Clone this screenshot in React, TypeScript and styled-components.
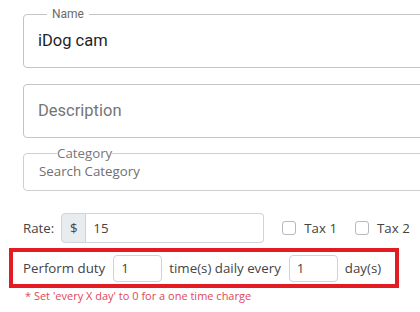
import styled, { createGlobalStyle } from "styled-components"

const GlobalStyle = createGlobalStyle`
  html, body {
    margin: 0;
    background: #ffffff;
    overflow: hidden;
  }
  * {
    box-sizing: border-box;
  }
`

export default function App() {
  return (
    <>
      <GlobalStyle />
      <Page>
        <OutlinedField>
          <OutlinedLegend>Name</OutlinedLegend>
          <OutlinedValue>iDog cam</OutlinedValue>
        </OutlinedField>

        <PlainField>
          <Placeholder>Description</Placeholder>
        </PlainField>

        <CategoryField>
          <CategoryLegend>Category</CategoryLegend>
          <CategoryText>Search Category</CategoryText>
        </CategoryField>

        <RateRow>
          <Label>Rate:</Label>
          <Addon>$</Addon>
          <RateInput>15</RateInput>
          <Check>
            <Box />
            <span>Tax 1</span>
          </Check>
          <Check>
            <Box />
            <span>Tax 2</span>
          </Check>
        </RateRow>

        <DutyRow>
          <Label>Perform duty</Label>
          <SmallInput>1</SmallInput>
          <Label>time(s) daily every</Label>
          <SmallInput>1</SmallInput>
          <Label>day(s)</Label>
        </DutyRow>
        <Hint>* Set 'every X day' to 0 for a one time charge</Hint>
      </Page>
    </>
  )
}

const Page = styled.div`
  padding: 7px 0 0 23px;
  width: 420px;
  font-family: "Open Sans", "Noto Sans", sans-serif;
`

const OutlinedField = styled.fieldset`
  margin: 0;
  width: 420px;
  height: 61px;
  padding: 0 14px;
  border: 1px solid #c4c4c4;
  border-radius: 4px;
  font-family: Roboto, sans-serif;
`

const OutlinedLegend = styled.legend`
  margin-left: 9px;
  padding: 0 5px;
  font-size: 12px;
  line-height: 14px;
  color: #6b6b6b;
`

const OutlinedValue = styled.div`
  padding-top: 10px;
  font-size: 16.5px;
  line-height: 20px;
  color: #1f1f1f;
`

const PlainField = styled.div`
  margin-top: 16px;
  width: 420px;
  height: 54px;
  padding: 0 14px;
  display: flex;
  align-items: center;
  border: 1px solid #c4c4c4;
  border-radius: 4px;
  font-family: Roboto, sans-serif;
`

const Placeholder = styled.span`
  padding-bottom: 2px;
  font-size: 16.5px;
  color: #757575;
`

const CategoryField = styled.fieldset`
  margin: 7px 0 0;
  width: 420px;
  height: 46px;
  padding: 0 15px;
  border: 1px solid #cfcfcf;
  border-radius: 4px;
`

const CategoryLegend = styled.legend`
  margin-left: 18px;
  padding: 0;
  font-size: 13.3px;
  line-height: 16px;
  color: #777777;
`

const CategoryText = styled.div`
  padding-top: 1px;
  font-size: 13.3px;
  line-height: 18px;
  color: #6f6f6f;
`

const RateRow = styled.div`
  margin-top: 22px;
  display: flex;
  align-items: center;
  height: 30px;
`

const Label = styled.span`
  font-size: 13.3px;
  color: #444444;
  white-space: nowrap;
`

const Addon = styled.div`
  margin-left: 7px;
  width: 25px;
  height: 30px;
  display: grid;
  place-items: center;
  background: #e9ecef;
  border: 1px solid #ced4da;
  border-radius: 4px 0 0 4px;
  font-size: 13.3px;
  color: #444444;
`

const RateInput = styled.div`
  width: 178px;
  height: 30px;
  padding: 0 7px;
  display: flex;
  align-items: center;
  border: 1px solid #ced4da;
  border-left: none;
  border-radius: 0 4px 4px 0;
  font-size: 13.3px;
  color: #444444;
`

const Check = styled.label`
  margin-left: 18px;
  display: flex;
  align-items: center;
  gap: 8px;
  font-size: 13.3px;
  color: #444444;
`

const Box = styled.span`
  width: 14px;
  height: 14px;
  border: 1px solid #b5bbc1;
  border-radius: 3px;
`

const DutyRow = styled.div`
  margin: 5px 0 0 -14px;
  width: 390px;
  height: 40px;
  padding-left: 10px;
  display: flex;
  align-items: center;
  border: 4px solid #e31b23;
`

const SmallInput = styled.div`
  margin: 0 7px 0 8px;
  width: 49px;
  height: 27px;
  padding: 0 7px;
  display: flex;
  align-items: center;
  border: 1px solid #ced4da;
  border-radius: 4px;
  font-size: 13.3px;
  color: #444444;
`

const Hint = styled.div`
  margin: 0 0 0 2px;
  font-size: 11px;
  color: #e0485a;
`
